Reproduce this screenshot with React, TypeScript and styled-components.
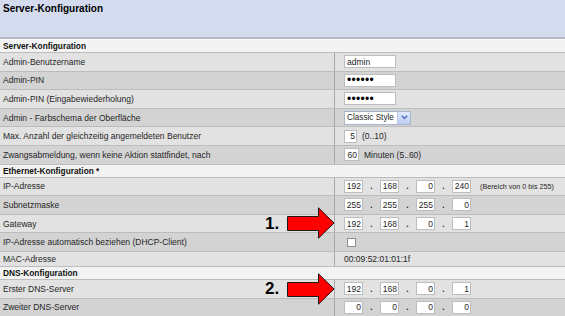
import React from "react";
import styled, { createGlobalStyle } from "styled-components";

const GlobalStyle = createGlobalStyle`
  html, body { margin: 0; padding: 0; background: #fff; }
  body { font-family: "Liberation Sans", Arial, sans-serif; }
`;

const Page = styled.div`
  position: relative;
  width: 565px;
  height: 316px;
  overflow: hidden;
  background: #e1e1e1;
`;

const TitleBar = styled.header`
  height: 39px;
  box-sizing: border-box;
  background: #d4dbee;
  border-bottom: 2px solid #b7bac4;
  padding: 3px 3px 0;
  font-size: 10px;
  line-height: 12px;
  font-weight: bold;
  color: #000;
`;

const Table = styled.div`
  border-top: 1px solid #f7f7f7;
`;

const SectionRow = styled.div<{ $first?: boolean }>`
  height: ${(p) => (p.$first ? 12 : 13)}px;
  box-sizing: border-box;
  background: #f3f3f3;
  border-top: ${(p) => (p.$first ? "none" : "1px solid #bdbdbd")};
  padding-left: 3px;
  display: flex;
  align-items: center;
  font-size: 8.3px;
  font-weight: bold;
  color: #111;
`;

const Row = styled.div<{ $dark?: boolean; $h?: number }>`
  display: grid;
  grid-template-columns: 334px 1fr;
  height: ${(p) => p.$h ?? 18.6}px;
  box-sizing: border-box;
  border-top: 1px solid #bcbcbc;
  background: ${(p) => (p.$dark ? "#d3d3d3" : "#e2e2e2")};
`;

const Label = styled.div`
  display: flex;
  align-items: center;
  padding-left: 3px;
  font-size: 8.5px;
  color: #262626;
  white-space: nowrap;
`;

const Value = styled.div`
  display: flex;
  align-items: center;
  border-left: 1px solid #a9a9a9;
  padding-left: 9px;
  font-size: 8.5px;
  color: #262626;
  white-space: nowrap;
`;

const TextInput = styled.input<{ $w: number; $right?: boolean }>`
  width: ${(p) => p.$w}px;
  height: 13px;
  box-sizing: border-box;
  margin: 0;
  padding: ${(p) => (p.$right ? "0 1px 0 0" : "0 2px")};
  border: 1px solid #bdbdbd;
  background: #fff;
  font-family: "Liberation Sans", Arial, sans-serif;
  font-size: 8.5px;
  color: #262626;
  text-align: ${(p) => (p.$right ? "right" : "left")};
  outline: none;
`;

const PinInput = styled(TextInput)`
  font-size: 12px;
  letter-spacing: 0.3px;
  color: #000;
`;

const Hint = styled.span<{ $small?: boolean }>`
  margin-left: ${(p) => (p.$small ? 9 : 5)}px;
  font-size: ${(p) => (p.$small ? 7.2 : 8.5)}px;
`;

const Dot = styled.span`
  width: 17px;
  text-align: center;
  font-weight: bold;
  font-size: 8.5px;
`;

const SelectBox = styled.div`
  display: flex;
  align-items: stretch;
  width: 67px;
  height: 14px;
  box-sizing: border-box;
  border: 1px solid #a9b6c9;
  background: #fff;
`;

const SelectText = styled.span`
  flex: 1;
  padding-left: 2px;
  display: flex;
  align-items: center;
  font-size: 8.2px;
  color: #262626;
  overflow: hidden;
`;

const SelectButton = styled.span`
  width: 12px;
  display: flex;
  align-items: center;
  justify-content: center;
  background: linear-gradient(#dfe8fd, #bccdf6);
  border-left: 1px solid #b9c8ea;
`;

const CheckBox = styled.input`
  appearance: none;
  width: 9px;
  height: 9px;
  margin: 0 0 0 3px;
  border: 1px solid #8e8e8e;
  background: #fff;
`;

const Arrow = styled.svg<{ $top: number }>`
  position: absolute;
  left: 287px;
  top: ${(p) => p.$top}px;
`;

const Marker = styled.span<{ $top: number }>`
  position: absolute;
  left: 265px;
  top: ${(p) => p.$top}px;
  font-size: 17px;
  line-height: 17px;
  font-weight: bold;
  color: #000;
`;

function IP({ parts }: { parts: string[] }) {
  return (
    <>
      {parts.map((p, i) => (
        <React.Fragment key={i}>
          {i > 0 && <Dot>.</Dot>}
          <TextInput $w={19} $right readOnly value={p} />
        </React.Fragment>
      ))}
    </>
  );
}

function RedArrow({ top }: { top: number }) {
  return (
    <Arrow $top={top} width="48" height="32" viewBox="0 0 48 32">
      <polygon
        points="0.5,9.5 31.5,9.5 31.5,0.8 47,16 31.5,31.2 31.5,23.5 0.5,23.5"
        fill="#ff0000"
        stroke="#1a1a1a"
        strokeWidth="1"
      />
    </Arrow>
  );
}

export default function App() {
  return (
    <>
      <GlobalStyle />
      <Page>
        <TitleBar>Server-Konfiguration</TitleBar>
        <Table>
          <SectionRow $first>Server-Konfiguration</SectionRow>
          <Row>
            <Label>Admin-Benutzername</Label>
            <Value>
              <TextInput $w={52} readOnly value="admin" />
            </Value>
          </Row>
          <Row $dark>
            <Label>Admin-PIN</Label>
            <Value>
              <PinInput $w={52} type="password" readOnly value="123456" />
            </Value>
          </Row>
          <Row>
            <Label>Admin-PIN (Eingabewiederholung)</Label>
            <Value>
              <PinInput $w={52} type="password" readOnly value="123456" />
            </Value>
          </Row>
          <Row $dark>
            <Label>Admin - Farbschema der Oberfläche</Label>
            <Value>
              <SelectBox>
                <SelectText>Classic Style</SelectText>
                <SelectButton>
                  <svg width="7" height="5" viewBox="0 0 7 5">
                    <polyline points="0.8,0.8 3.5,3.6 6.2,0.8" fill="none" stroke="#4d6fb8" strokeWidth="1.4" />
                  </svg>
                </SelectButton>
              </SelectBox>
            </Value>
          </Row>
          <Row>
            <Label>Max. Anzahl der gleichzeitig angemeldeten Benutzer</Label>
            <Value>
              <TextInput $w={13} $right readOnly value="5" />
              <Hint>(0..10)</Hint>
            </Value>
          </Row>
          <Row $dark>
            <Label>Zwangsabmeldung, wenn keine Aktion stattfindet, nach</Label>
            <Value>
              <TextInput $w={15} $right readOnly value="60" />
              <Hint>Minuten (5..60)</Hint>
            </Value>
          </Row>

          <SectionRow>Ethernet-Konfiguration *</SectionRow>
          <Row>
            <Label>IP-Adresse</Label>
            <Value>
              <IP parts={["192", "168", "0", "240"]} />
              <Hint $small>(Bereich von 0 bis 255)</Hint>
            </Value>
          </Row>
          <Row $dark>
            <Label>Subnetzmaske</Label>
            <Value>
              <IP parts={["255", "255", "255", "0"]} />
            </Value>
          </Row>
          <Row>
            <Label>Gateway</Label>
            <Value>
              <IP parts={["192", "168", "0", "1"]} />
            </Value>
          </Row>
          <Row $dark>
            <Label>IP-Adresse automatisch beziehen (DHCP-Client)</Label>
            <Value>
              <CheckBox type="checkbox" readOnly />
            </Value>
          </Row>
          <Row $h={15}>
            <Label>MAC-Adresse</Label>
            <Value>00:09:52:01:01:1f</Value>
          </Row>

          <SectionRow>DNS-Konfiguration</SectionRow>
          <Row>
            <Label>Erster DNS-Server</Label>
            <Value>
              <IP parts={["192", "168", "0", "1"]} />
            </Value>
          </Row>
          <Row $dark>
            <Label>Zweiter DNS-Server</Label>
            <Value>
              <IP parts={["0", "0", "0", "0"]} />
            </Value>
          </Row>
        </Table>

        <Marker $top={215}>1.</Marker>
        <RedArrow top={207} />
        <Marker $top={280}>2.</Marker>
        <RedArrow top={273} />
      </Page>
    </>
  );
}
